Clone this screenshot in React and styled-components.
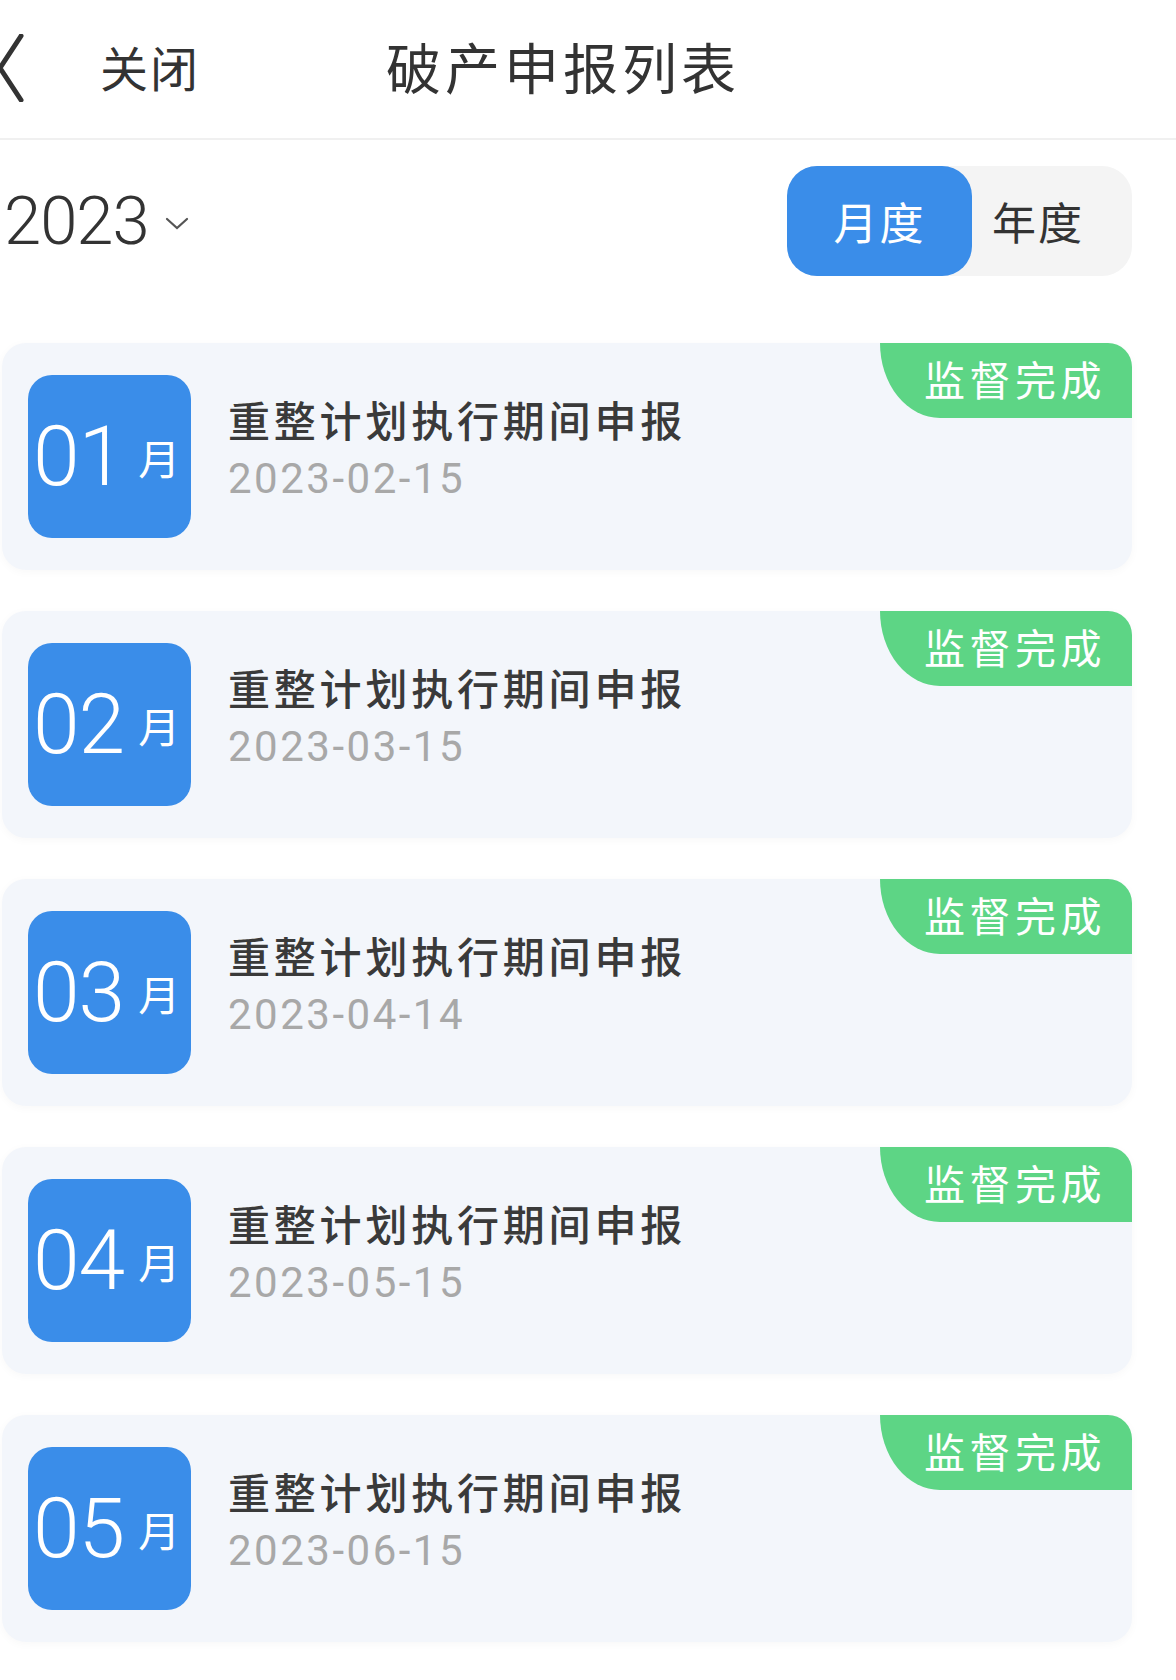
import React, {useState} from 'react';
import styled, {createGlobalStyle} from 'styled-components';

const GlobalStyle = createGlobalStyle`
    body {
        margin: 0;
        background: #fff;
        font-family: "Noto Sans CJK SC", "Noto Sans", sans-serif;
    }
`;

const reports = [
    {month: "01", date: "2023-02-15"},
    {month: "02", date: "2023-03-15"},
    {month: "03", date: "2023-04-14"},
    {month: "04", date: "2023-05-15"},
    {month: "05", date: "2023-06-15"},
];

function App() {
    const [mode, setMode] = useState("month");

    return (
        <Page>
            <GlobalStyle />
            <Header>
                <BackIcon viewBox="0 0 26 68">
                    <path d="M23 2 L2 34 L23 66" fill="none" stroke="#333" strokeWidth="5" strokeLinecap="round" strokeLinejoin="round" />
                </BackIcon>
                <Close>关闭</Close>
                <Title>破产申报列表</Title>
            </Header>
            <Toolbar>
                <Year>
                    2023
                    <svg width="28" height="18" viewBox="0 0 28 18">
                        <path d="M4 5 L14 14 L24 5" fill="none" stroke="#555" strokeWidth="2.2" strokeLinecap="round" />
                    </svg>
                </Year>
                <Segment>
                    <SegItem active={mode === "month"} onClick={() => setMode("month")}>月度</SegItem>
                    <SegItem active={mode === "year"} onClick={() => setMode("year")}>年度</SegItem>
                </Segment>
            </Toolbar>
            <List>
                {reports.map((item) => (
                    <Card key={item.month}>
                        <MonthBadge>
                            <span>{item.month}</span>
                            <small>月</small>
                        </MonthBadge>
                        <Info>
                            <h3>重整计划执行期间申报</h3>
                            <p>{item.date}</p>
                        </Info>
                        <Status>监督完成</Status>
                    </Card>
                ))}
            </List>
        </Page>
    )
}

export default App;

const Page = styled.div`
    width: 1176px;
    min-height: 1680px;
    background: #fff;
    padding-bottom: 40px;
`;
const Header = styled.div`
    height: 138px;
    display: flex;
    align-items: center;
    border-bottom: 2px solid #f0f0f0;
`;
const BackIcon = styled.svg`
    width: 26px;
    height: 68px;
    margin-left: -2px;
    margin-top: -2px;
`;
const Close = styled.div`
    margin-left: 76px;
    margin-top: -6px;
    font-size: 48px;
    color: #333;
    letter-spacing: 2px;
`;
const Title = styled.div`
    margin-left: 186px;
    margin-top: -8px;
    font-size: 55px;
    color: #333;
    letter-spacing: 4px;
`;
const Toolbar = styled.div`
    display: flex;
    justify-content: space-between;
    align-items: center;
    padding: 26px 44px 0 4px;
`;
const Year = styled.div`
    display: flex;
    align-items: center;
    gap: 14px;
    font-family: Roboto, "Noto Sans", sans-serif;
    font-size: 67px;
    font-weight: 300;
    letter-spacing: -1px;
    color: #333;
    svg {
        margin-top: 4px;
    }
`;
const Segment = styled.div`
    display: flex;
    width: 345px;
    height: 110px;
    border-radius: 30px;
    background: #f4f4f4;
`;
const SegItem = styled.div`
    box-sizing: border-box;
    flex-shrink: 0;
    display: flex;
    align-items: center;
    justify-content: ${({active}) => (active ? "center" : "flex-start")};
    font-size: 44px;
    letter-spacing: 2px;
    cursor: pointer;
    border-radius: 30px;
    width: ${({active}) => (active ? "185px" : "160px")};
    padding-left: ${({active}) => (active ? "0" : "20px")};
    color: ${({active}) => (active ? "#fff" : "#333")};
    background: ${({active}) => (active ? "#3a8de9" : "transparent")};
`;
const List = styled.div`
    display: flex;
    flex-direction: column;
    gap: 41px;
    margin: 67px 44px 0 2px;
`;
const Card = styled.div`
    position: relative;
    height: 227px;
    display: flex;
    align-items: center;
    padding: 0 26px;
    border-radius: 24px;
    background: #f3f6fb;
    box-shadow: 0 2px 10px rgba(0, 0, 0, 0.03);
`;
const MonthBadge = styled.div`
    width: 163px;
    height: 163px;
    flex-shrink: 0;
    border-radius: 24px;
    background: #3a8de9;
    color: #fff;
    display: flex;
    align-items: center;
    padding-left: 5px;
    box-sizing: border-box;
    span {
        font-family: Roboto, "Noto Sans", sans-serif;
        font-size: 84px;
        font-weight: 300;
        letter-spacing: -1px;
        line-height: 1;
    }
    small {
        font-size: 42px;
        margin-left: 14px;
        line-height: 1;
    }
`;
const Info = styled.div`
    margin-left: 37px;
    margin-top: -20px;
    h3 {
        margin: 0;
        font-size: 42px;
        font-weight: 500;
        letter-spacing: 3.8px;
        color: #3a3a3a;
        line-height: 56px;
    }
    p {
        margin: 8px 0 0;
        font-family: Roboto, "Noto Sans", sans-serif;
        font-size: 42px;
        letter-spacing: 2.5px;
        color: #a8a8a8;
        line-height: 48px;
    }
`;
const Status = styled.div`
    position: absolute;
    top: 0;
    right: 0;
    width: 252px;
    height: 75px;
    box-sizing: border-box;
    padding-left: 44px;
    padding-bottom: 6px;
    display: flex;
    align-items: center;
    font-size: 41px;
    letter-spacing: 4.5px;
    color: #fff;
    background: #5dd585;
    border-radius: 0 24px 0 60px / 0 24px 0 75px;
`;
